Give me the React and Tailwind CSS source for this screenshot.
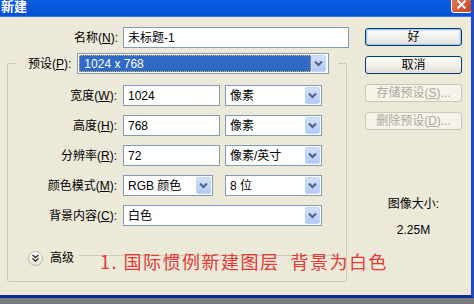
import React from 'react';

const FONT = "font-['Liberation_Sans','Noto_Sans_CJK_SC',sans-serif]";

const Chevron = () => (
  <div className="w-[15px] h-[17px] mr-[1px] rounded-[2px] border border-[#c3d3fd] bg-gradient-to-b from-[#d2e0fd] to-[#b3c9f7] flex items-center justify-center">
    <svg width="9" height="7" viewBox="0 0 9 7">
      <path d="M1 1.5 L4.5 5 L8 1.5" fill="none" stroke="#4d6185" strokeWidth="2" />
    </svg>
  </div>
);

const Input = ({ value, w }) => (
  <div className={`${w} h-[21px] border border-[#7f9db9] bg-white flex items-center pl-[4px] text-[12px] text-black`}>
    {value}
  </div>
);

const Select = ({ value, w }) => (
  <div className={`${w} h-[21px] border border-[#7f9db9] bg-white flex items-center justify-between pl-[4px] text-[12px] text-black`}>
    <span>{value}</span>
    <Chevron />
  </div>
);

const Label = ({ text, k }) => (
  <div className="w-[110px] text-right text-[12px] text-black pr-[1px]">
    {text}(<span className="underline">{k}</span>):
  </div>
);

const Button = ({ children, primary, disabled }) => {
  if (disabled) {
    return (
      <div className="w-[97px] h-[18px] rounded-[3px] border border-[#c9c7ba] bg-[#f5f4ea] flex items-center justify-center text-[12px] text-[#aca899]">
        {children}
      </div>
    );
  }
  return (
    <div
      className={`w-[97px] h-[18px] rounded-[3px] border border-[#003c74] bg-gradient-to-b from-white to-[#e3e1d6] flex items-center justify-center text-[12px] text-black ${
        primary ? 'shadow-[inset_0_0_0_1px_#a9c6f1,inset_0_0_0_2px_#d5e3f8]' : ''
      }`}
    >
      {children}
    </div>
  );
};

export default function App() {
  return (
    <div className={`w-[474px] h-[304px] bg-[#7b7b7b] overflow-hidden ${FONT}`}>
      <div className="h-[298px] flex flex-col border-r-[3px] border-r-[#1a4bd0] border-b-[3px] border-b-[#0b2b9c]">
        {/* Title bar */}
        <div className="h-[17px] relative bg-gradient-to-b from-[#0a5ee2] to-[#0650d4] border-b border-b-[#3a7ae6] overflow-hidden">
          <div className="absolute left-[1px] top-0 text-[13px] font-bold text-white leading-[14px]">新建</div>
          <div className="absolute left-[451px] top-[-8px] w-[21px] h-[21px] rounded-[3px] border border-white bg-gradient-to-br from-[#e7805e] to-[#c9401b] flex items-end justify-center pb-[2px]">
            <svg width="11" height="11" viewBox="0 0 11 11">
              <path d="M1.5 1.5 L9.5 9.5 M9.5 1.5 L1.5 9.5" stroke="white" strokeWidth="2" />
            </svg>
          </div>
        </div>

        {/* Body */}
        <div className="flex-1 bg-[#ece9d8] flex relative">
          <div className="w-[349px] pl-[7px] pt-[10px]">
            <div className="flex items-center">
              <div className="w-[111px] text-right text-[12px] text-black">
                名称(<span className="underline">N</span>):
              </div>
              <div className="ml-[5px]">
                <Input value="未标题-1" w="w-[226px]" />
              </div>
            </div>

            <fieldset className="mt-[5px] w-[340px] h-[229px] border border-[#cdcab9] rounded-[2px] px-0">
              <legend className="ml-[8px] bg-[#ece9d8] flex items-center pl-[12px] pr-[9px]">
                <span className="text-[12px] text-black">
                  预设(<span className="underline">P</span>):
                </span>
                <div className="ml-[6px] w-[252px] h-[21px] border border-[#7f9db9] bg-white flex items-center justify-between p-[1px]">
                  <div className="flex-1 h-full bg-[#316ac5] border border-dotted border-[#d9b45a] flex items-center pl-[4px] text-[12px] text-white">
                    1024 x 768
                  </div>
                  <Chevron />
                </div>
              </legend>

              <div className="mt-[11px] flex flex-col gap-[9px]">
                <div className="flex items-center">
                  <Label text="宽度" k="W" />
                  <div className="ml-[5px] flex gap-[5px]">
                    <Input value="1024" w="w-[97px]" />
                    <Select value="像素" w="w-[97px]" />
                  </div>
                </div>
                <div className="flex items-center">
                  <Label text="高度" k="H" />
                  <div className="ml-[5px] flex gap-[5px]">
                    <Input value="768" w="w-[97px]" />
                    <Select value="像素" w="w-[97px]" />
                  </div>
                </div>
                <div className="flex items-center">
                  <Label text="分辨率" k="R" />
                  <div className="ml-[5px] flex gap-[5px]">
                    <Input value="72" w="w-[97px]" />
                    <Select value="像素/英寸" w="w-[97px]" />
                  </div>
                </div>
                <div className="flex items-center">
                  <Label text="颜色模式" k="M" />
                  <div className="ml-[5px] flex gap-[12px]">
                    <Select value="RGB 颜色" w="w-[90px]" />
                    <Select value="8 位" w="w-[97px]" />
                  </div>
                </div>
                <div className="flex items-center">
                  <Label text="背景内容" k="C" />
                  <div className="ml-[5px]">
                    <Select value="白色" w="w-[199px]" />
                  </div>
                </div>
              </div>

              <div className="mt-[23px] flex items-center pl-[20px] pr-[6px]">
                <div className="w-[15px] h-[15px] rounded-full border border-[#b8b6a8] bg-gradient-to-b from-white to-[#e4e2d6] flex items-center justify-center">
                  <svg width="9" height="9" viewBox="0 0 9 9">
                    <path d="M1.5 1 L4.5 3.5 L7.5 1 M1.5 4.5 L4.5 7 L7.5 4.5" fill="none" stroke="#333" strokeWidth="1.4" />
                  </svg>
                </div>
                <span className="ml-[7px] text-[12px] text-black">高级</span>
                <div className="ml-[5px] flex-1 h-px bg-[#cdcab9] -mt-[6px]" />
              </div>
            </fieldset>
          </div>

          <div className="ml-[16px] pt-[11px] w-[97px] flex flex-col">
            <div className="flex flex-col gap-[10px]">
              <Button primary>好</Button>
              <Button>取消</Button>
              <Button disabled>
                存储预设(<span className="underline">S</span>)...
              </Button>
              <Button disabled>
                删除预设(<span className="underline">D</span>)...
              </Button>
            </div>
            <div className="mt-[67px] text-center text-[12px] text-black leading-[14px]">图像大小:</div>
            <div className="mt-[12px] text-center text-[12px] text-black leading-[14px]">2.25M</div>
          </div>

          <div className="absolute left-[100px] top-[234px] text-[18px] leading-[20px] tracking-[1.5px] text-[#e23a36] font-['Noto_Sans_CJK_SC',sans-serif] whitespace-pre">
            1. 国际惯例新建图层  背景为白色
          </div>
        </div>
      </div>
    </div>
  );
}
